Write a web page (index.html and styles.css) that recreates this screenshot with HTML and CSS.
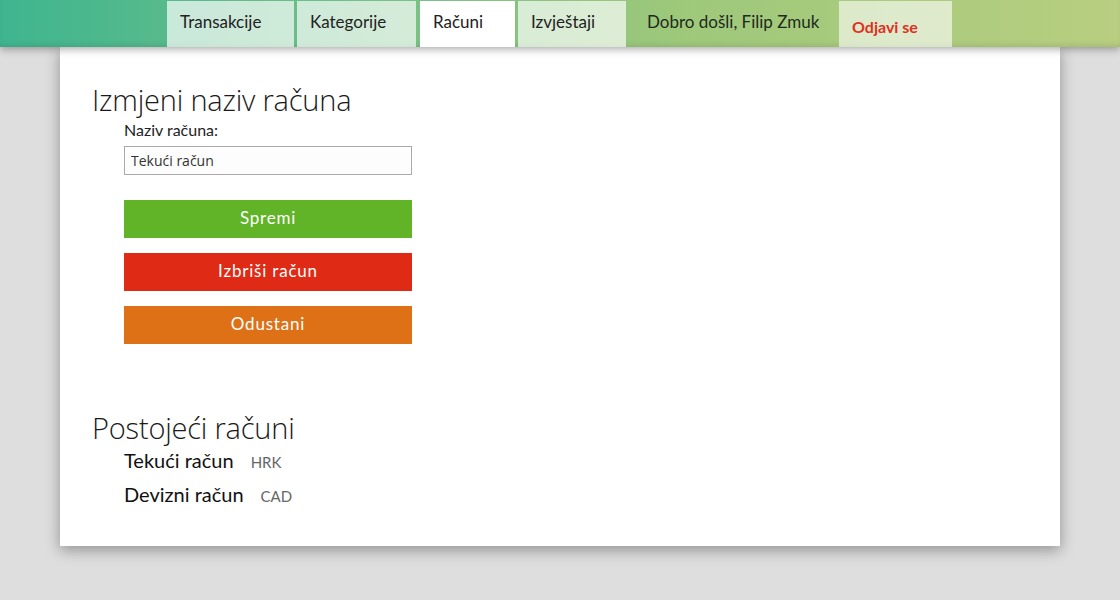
FILE: index.html
```html
<!DOCTYPE html>
<html lang="hr">
<head>
<meta charset="utf-8">
<title>Računi</title>
<link rel="stylesheet" href="styles.css">
</head>
<body>
<header class="topbar">
  <nav class="nav">
    <a class="tab tab-trans">Transakcije</a>
    <a class="tab tab-kat">Kategorije</a>
    <a class="tab tab-active tab-rac">Računi</a>
    <a class="tab tab-izv">Izvještaji</a>
    <span class="welcome">Dobro došli, Filip Zmuk</span>
    <a class="tab logout">Odjavi se</a>
  </nav>
</header>
<main class="card">
  <section class="edit">
    <h1 class="title">Izmjeni naziv računa</h1>
    <form class="form">
      <label class="label">Naziv računa:</label>
      <input class="input" type="text" value="Tekući račun">
      <div class="buttons">
        <button type="button" class="btn btn-save">Spremi</button>
        <button type="button" class="btn btn-delete">Izbriši račun</button>
        <button type="button" class="btn btn-cancel">Odustani</button>
      </div>
    </form>
  </section>
  <section class="existing">
    <h1 class="title">Postojeći računi</h1>
    <ul class="list">
      <li class="item"><span class="name">Tekući račun</span><span class="cur">HRK</span></li>
      <li class="item"><span class="name">Devizni račun</span><span class="cur">CAD</span></li>
    </ul>
  </section>
</main>
</body>
</html>
```
FILE: styles.css
```css
* { box-sizing: border-box; }
html, body { margin: 0; padding: 0; }
body {
  background: #dedede;
  font-family: Lato, "Open Sans", sans-serif;
  color: #222;
  height: 600px;
  overflow: hidden;
}
.topbar {
  height: 47px;
  background: linear-gradient(to right, #3fb58f 0%, #6fbf88 30%, #9dc87a 60%, #b8ce80 100%);
  box-shadow: 0 2px 8px rgba(0,0,0,0.35), inset 0 -4px 6px -3px rgba(0,0,0,0.12);
  position: relative;
  z-index: 2;
}
.nav {
  display: flex;
  height: 47px;
  padding-left: 167px;
  padding-top: 1px;
}
.tab {
  display: flex;
  align-items: center;
  padding: 0 0 5px 13px;
  font-size: 17px;
  color: #222;
  background: rgba(255,255,255,0.68);
  margin-right: 3px;
}
.tab-trans { width: 127px; }
.tab-kat { width: 119px; margin-right: 4px; }
.tab-rac { width: 95px; }
.tab-izv { width: 108px; margin-right: 0; }
.tab-active { background: #fff; }
.welcome {
  display: flex;
  align-items: center;
  width: 213px;
  padding: 0 0 5px 21px;
  font-size: 17px;
  color: #1e2a1e;
}
.logout {
  width: 113px;
  padding: 4px 0 0 13px;
  font-size: 16px;
  color: #e0301e;
  font-weight: 700;
  margin-right: 0;
  background: rgba(255,255,255,0.6);
}
.card {
  position: relative;
  z-index: 1;
  width: 1000px;
  height: 499px;
  margin: 0 60px;
  background: #fff;
  box-shadow: 0 4px 14px rgba(0,0,0,0.35);
  padding: 33px 32px 0;
}
.title {
  margin: 0;
  font-family: "Open Sans", sans-serif;
  font-weight: 300;
  font-size: 29px;
  line-height: 40px;
  color: #1a1a1a;
  letter-spacing: -0.2px;
}
.form {
  padding-left: 32px;
  display: flex;
  flex-direction: column;
}
.label {
  font-size: 16px;
  line-height: 20px;
  color: #222;
}
.input {
  width: 288px;
  height: 29px;
  margin-top: 6px;
  border: 1px solid #aaa;
  padding: 0 6px;
  font-family: "Open Sans", sans-serif;
  font-size: 14px;
  color: #333;
  background: #fdfdfd;
}
.buttons {
  display: flex;
  flex-direction: column;
  gap: 15px;
  margin-top: 25px;
}
.btn {
  width: 288px;
  height: 38px;
  border: 0;
  padding: 0 0 3px;
  color: #fff;
  font-family: Lato, sans-serif;
  font-size: 17px;
  font-weight: 400;
  letter-spacing: 0.8px;
}
.btn-save { background: #61b327; }
.btn-delete { background: #df2a15; }
.btn-cancel { background: #de7016; }
.existing { margin-top: 64px; }
.list {
  list-style: none;
  margin: 0;
  padding: 0 0 0 32px;
}
.item {
  display: flex;
  align-items: baseline;
  height: 34px;
  line-height: 24px;
}
.name {
  font-size: 20px;
  color: #111;
}
.cur {
  margin-left: 17px;
  font-size: 15px;
  color: #666;
}
```
